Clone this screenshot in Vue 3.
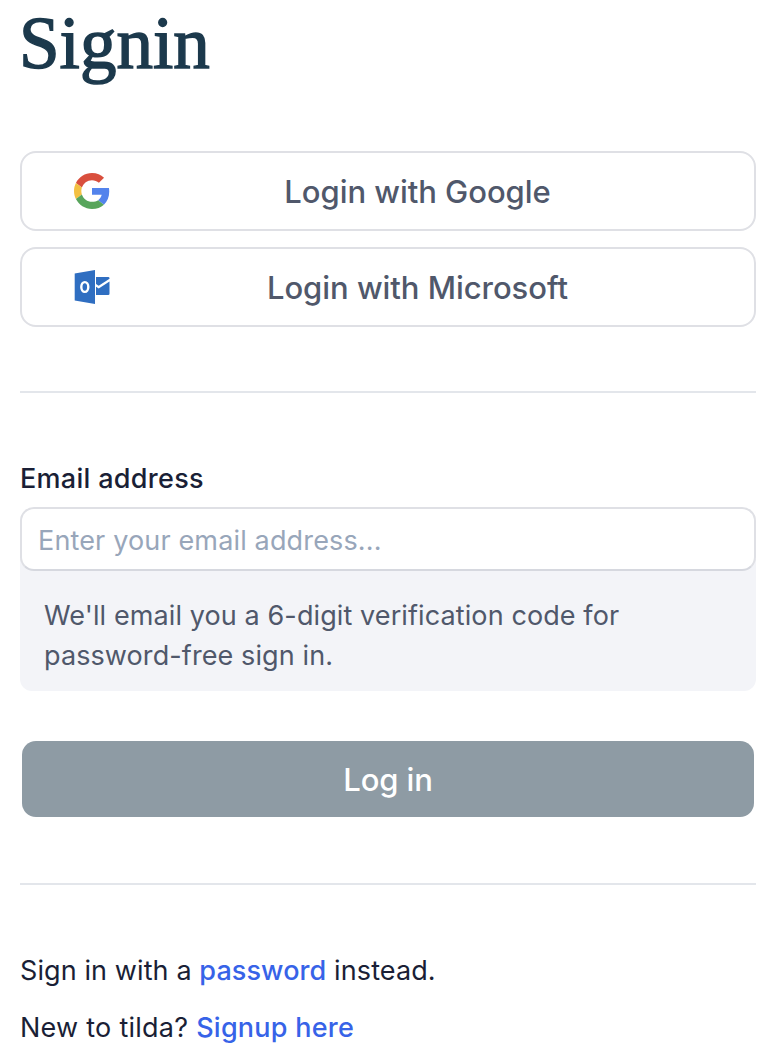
<script setup>
</script>

<template>
  <main class="page">
    <h1 class="title"><span>Signin</span></h1>
    <div class="providers">
      <button class="provider" type="button">
        <svg class="icon" viewBox="0 0 48 48">
          <path fill="#d94f3d" d="M24 9.5c3.54 0 6.71 1.22 9.21 3.6l6.85-6.85C35.9 2.38 30.47 0 24 0 14.62 0 6.51 5.38 2.56 13.22l7.98 6.19C12.43 13.72 17.74 9.5 24 9.5z" />
          <path fill="#5383ec" d="M46.98 24.55c0-1.57-.15-3.09-.38-4.55H24v9.02h12.94c-.58 2.96-2.26 5.48-4.78 7.18l7.73 6c4.51-4.18 7.09-10.36 7.09-17.65z" />
          <path fill="#f3c042" d="M10.53 28.59c-.48-1.45-.76-2.99-.76-4.59s.27-3.14.76-4.59l-7.98-6.19C.92 16.46 0 20.12 0 24c0 3.88.92 7.54 2.56 10.78l7.97-6.19z" />
          <path fill="#58a55c" d="M24 48c6.48 0 11.93-2.13 15.89-5.81l-7.73-6c-2.15 1.45-4.92 2.3-8.16 2.3-6.26 0-11.57-4.22-13.47-9.91l-7.98 6.19C6.51 42.62 14.62 48 24 48z" />
        </svg>
        <span class="label">Login with Google</span>
      </button>
      <button class="provider" type="button">
        <svg class="icon" viewBox="0 0 36 36">
          <path fill="#2f6ec1" d="M.7 4.6 21 1v34L.7 31.4z" />
          <path fill="#2f6ec1" d="M22 8h12.2q1.3 0 1.3 1.3v.4L24.7 16.8 22 15zM22 17.8l2.7 1.8L35.5 12.4v12.3q0 1.3-1.3 1.3H22z" />
          <ellipse cx="10.8" cy="18" rx="3.5" ry="4.9" fill="none" stroke="#fff" stroke-width="2.4" />
        </svg>
        <span class="label">Login with Microsoft</span>
      </button>
    </div>
    <hr class="rule">
    <form class="form" @submit.prevent>
      <label class="field-label" for="email"><span>Email address</span></label>
      <input id="email" class="input" type="email" placeholder="Enter your email address...">
      <p class="note">We'll email you a 6-digit verification code for<br>password-free sign in.</p>
      <button class="submit" type="submit"><span>Log in</span></button>
    </form>
    <hr class="rule second">
    <p class="line"><span>Sign in with a <a>password</a> instead.</span></p>
    <p class="line signup"><span>New to tilda? <a>Signup here</a></span></p>
  </main>
</template>

<style>
body {
  background: #fff;
}
</style>

<style scoped>
.page {
  box-sizing: border-box;
  width: 780px;
  height: 1062px;
  padding: 0 24px 0 20px;
  overflow: hidden;
  display: flex;
  flex-direction: column;
  font-family: Inter, "Liberation Sans", sans-serif;
  font-size: 27px;
  line-height: 40px;
  letter-spacing: 0.1px;
  color: #1a1f36;
}
.page > * {
  flex-shrink: 0;
}
.title {
  box-sizing: border-box;
  margin: 0;
  padding-top: 4px;
  height: 151px;
  font: 400 73px/80px "Liberation Serif", serif;
  letter-spacing: 0;
  text-indent: -1px;
  color: #1c394c;
  -webkit-text-stroke: 1.5px #1c394c;
}
.providers {
  display: flex;
  flex-direction: column;
  gap: 16px;
}
.provider {
  box-sizing: border-box;
  display: flex;
  align-items: center;
  height: 80px;
  padding: 0 50px 0 52px;
  border: 2px solid #dfe0e5;
  border-radius: 16px;
  background: #fff;
  color: #50586b;
  font: 500 31px/48px Inter, sans-serif;
  letter-spacing: -0.04px;
}
.icon {
  width: 36px;
  height: 36px;
  flex: none;
}
.label {
  flex: 1;
  text-align: center;
  padding: 2px 0 0 21px;
}
.rule {
  width: 100%;
  height: 2px;
  margin: 64px 0 0;
  border: 0;
  background: #e3e6eb;
}
.form {
  display: flex;
  flex-direction: column;
  margin-top: 66px;
}
.field-label {
  font-weight: 500;
  letter-spacing: 0.3px;
  margin-bottom: 8px;
}
.input {
  box-sizing: border-box;
  position: relative;
  z-index: 1;
  height: 64px;
  padding: 2px 16px 0;
  border: 2px solid #dfe0e5;
  border-bottom-color: #d6d8df;
  border-radius: 14px;
  background: #fff;
  font: 400 27px/40px Inter, sans-serif;
  letter-spacing: 0.15px;
  outline: none;
}
.input::placeholder {
  color: #98a6ba;
  opacity: 1;
}
.note {
  margin: -12px 0 0;
  padding: 37px 24px 15px;
  border-radius: 0 0 12px 12px;
  background: #f3f4f8;
  color: #50586b;
}
.submit {
  height: 76px;
  margin: 50px 2px 0;
  padding: 2px 0 0;
  border: 0;
  border-radius: 14px;
  background: #8e9ba4;
  color: #fff;
  font: 500 31px/48px Inter, sans-serif;
  letter-spacing: -0.15px;
}
.second {
  margin: 66px 0 66px;
}
.line {
  margin: 0 0 17px;
}
.signup {
  letter-spacing: 0.25px;
}
.line a {
  font-weight: 500;
  color: #3763e8;
}
</style>
